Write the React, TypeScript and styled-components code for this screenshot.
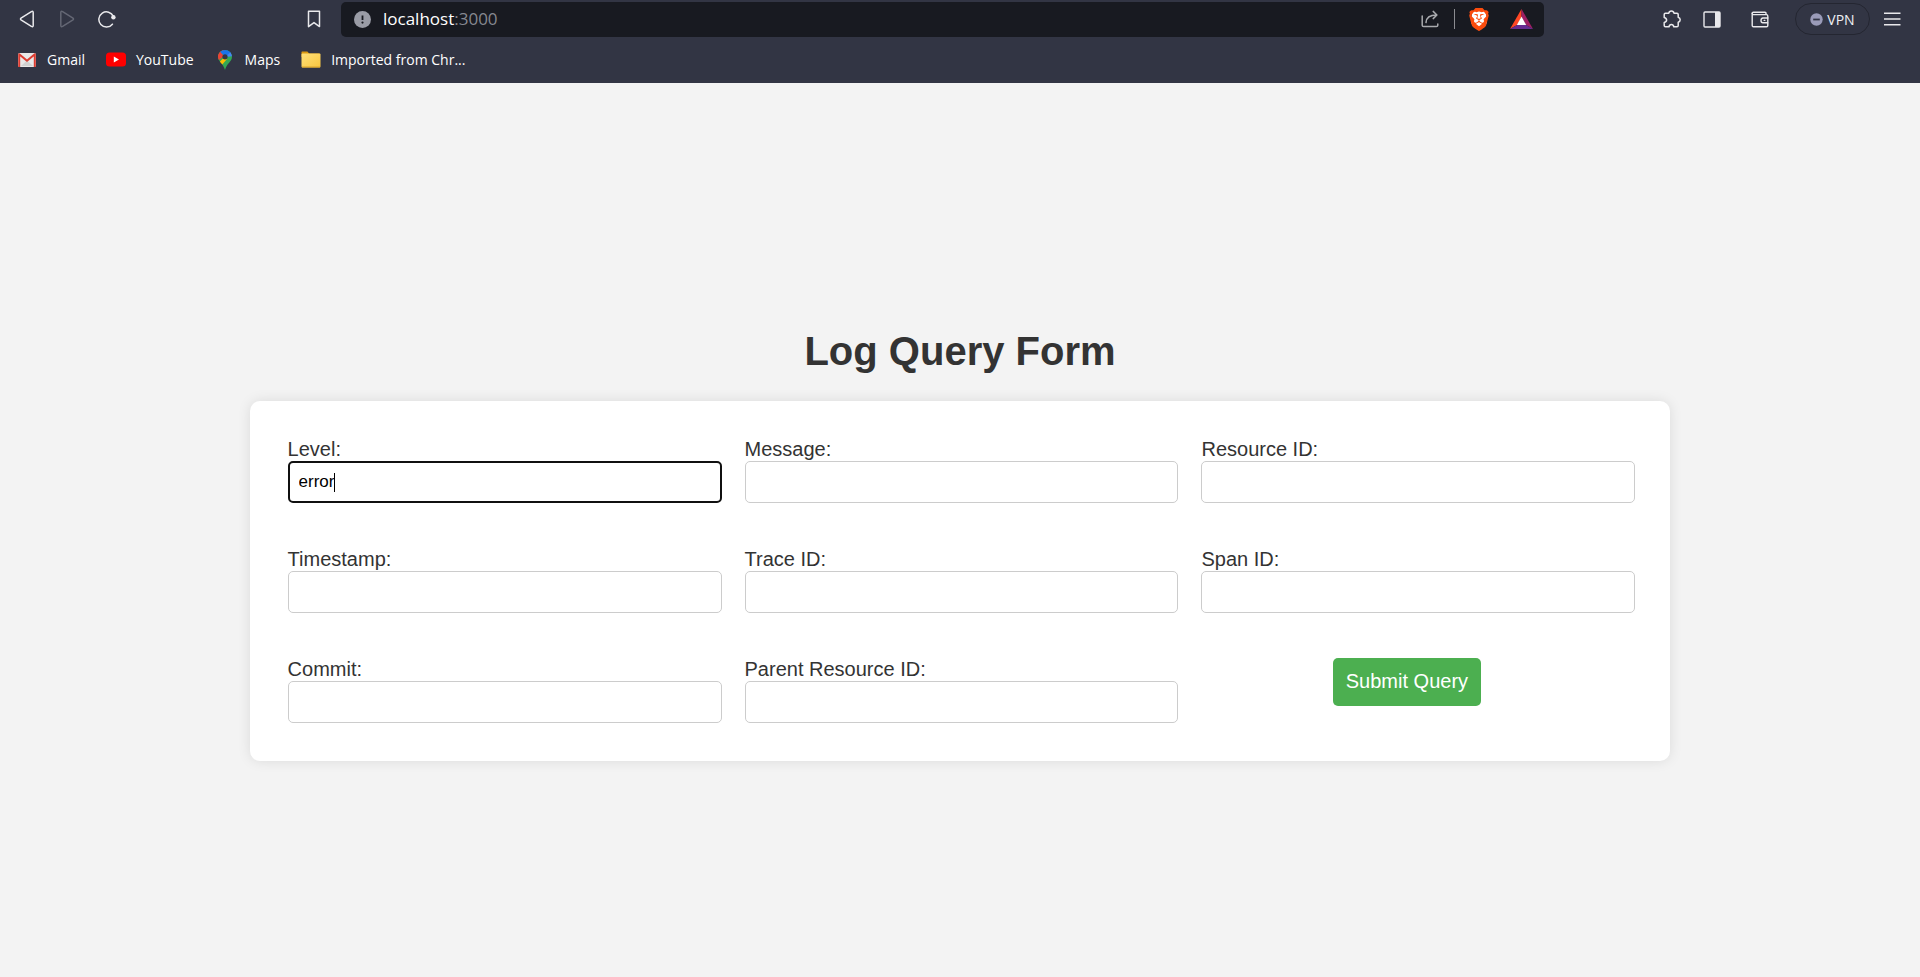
import React from "react";
import styled, { createGlobalStyle } from "styled-components";
import { SiBrave } from "react-icons/si";

const GlobalStyle = createGlobalStyle`
  *, *::before, *::after { box-sizing: border-box; }
  body {
    margin: 0;
    background: #f3f3f3;
    font-family: Arial, "Liberation Sans", sans-serif;
    color: #333;
  }
`;

const Page = styled.div`
  display: flex;
  flex-direction: column;
  min-height: 100vh;
`;

const BrowserBar = styled.header`
  display: flex;
  flex-direction: column;
  height: 83px;
  background: #323544;
  color: #fff;
  font-family: "Segoe UI", "Open Sans", "Noto Sans", sans-serif;
`;

const Toolbar = styled.div`
  display: flex;
  align-items: center;
  height: 38px;
  padding: 0 8px 0 7px;
`;

const NavGroup = styled.div`
  display: flex;
  align-items: center;
  width: 334px;
  padding-right: 7px;
`;

const ToolGroup = styled.div`
  display: flex;
  align-items: center;
  justify-content: flex-end;
  width: 368px;
`;

const IconButton = styled.button<{ $push?: boolean; $dim?: boolean; $gap?: number }>`
  display: flex;
  align-items: center;
  justify-content: center;
  width: 40px;
  height: 34px;
  margin: 0;
  margin-left: ${(p) => (p.$push ? "auto" : `${p.$gap ?? 0}px`)};
  padding: 0;
  border: 0;
  background: none;
  color: ${(p) => (p.$dim ? "#646774" : "#e9e9ec")};
`;

const AddressBar = styled.div`
  display: flex;
  flex: 1;
  align-items: center;
  height: 35px;
  padding: 0 3px 0 13px;
  border-radius: 5px;
  background: #181a21;
`;

const AddressText = styled.div`
  flex: 1;
  margin-left: 12px;
  font-size: 17px;
  line-height: 24px;
  outline: none;
`;

const Port = styled.span`
  color: #868890;
`;

const Divider = styled.span`
  width: 1px;
  height: 20px;
  margin: 0 4px;
  background: #8b8c91;
`;

const VpnButton = styled.button`
  display: flex;
  align-items: center;
  justify-content: center;
  gap: 4px;
  width: 75px;
  height: 32px;
  margin: 0 2px 0 15px;
  padding: 0;
  border: 1px solid #242631;
  border-radius: 16px;
  background: none;
  color: #f0f0f4;
  font-family: inherit;
  font-size: 14px;
`;

const Bookmarks = styled.nav`
  display: flex;
  align-items: center;
  gap: 21px;
  height: 43px;
  padding: 0 17px;
`;

const Bookmark = styled.a`
  display: flex;
  align-items: center;
  gap: 10px;
  color: #fff;
  font-size: 14px;
  line-height: 20px;
  text-decoration: none;
  white-space: nowrap;
`;

const Main = styled.main`
  display: flex;
  flex: 1;
  flex-direction: column;
  align-items: center;
  justify-content: center;
`;

const Title = styled.h1`
  margin: 28px 0 27px;
  font-size: 40px;
  line-height: 46px;
`;

const QueryForm = styled.form`
  display: grid;
  grid-template-columns: repeat(3, minmax(0, 1fr));
  column-gap: 23px;
  row-gap: 45px;
  width: 74%;
  padding: 37px 35px 38px 38px;
  border-radius: 10px;
  background: #fff;
  box-shadow: 0 0 13px rgba(0, 0, 0, 0.1);
`;

const Field = styled.div`
  display: flex;
  flex-direction: column;
`;

const Label = styled.label`
  font-size: 20px;
  line-height: 23px;
`;

const InputWrap = styled.div`
  position: relative;
  display: flex;
`;

const Caret = styled.span`
  position: absolute;
  top: 12px;
  left: 46px;
  display: none;
  width: 1px;
  height: 19px;
  background: #000;
`;

const TextInput = styled.input`
  width: 100%;
  height: 42px;
  padding: 0 10px;
  border: 1px solid #ccc;
  border-radius: 5px;
  background: #fff;
  color: #000;
  caret-color: transparent;
  font-family: inherit;
  font-size: 17px;

  &:focus {
    padding: 0 9px;
    border: 2px solid #101010;
    outline: none;
  }

  &:focus + ${Caret} {
    display: block;
  }
`;

const SubmitCell = styled.div`
  display: flex;
  align-items: flex-start;
  justify-content: center;
  padding-right: 23px;
`;

const SubmitButton = styled.button`
  height: 48px;
  padding: 0 13px;
  border: 0;
  border-radius: 5px;
  background: #4caf50;
  color: #fff;
  font-family: inherit;
  font-size: 20px;
`;

const stroke = {
  fill: "none",
  stroke: "currentColor",
  strokeWidth: 1.5,
  strokeLinecap: "round",
  strokeLinejoin: "round",
} as const;

const BackIcon = () => (
  <svg width="16" height="18" viewBox="0 0 16 18" {...stroke}>
    <path d="M2 8.2 12.4 1.6Q14.2.8 14.2 2.6V15.4Q14.2 17.2 12.4 16.4L2 9.8Q1 9 2 8.2Z" />
  </svg>
);

const ForwardIcon = () => (
  <svg width="16" height="18" viewBox="0 0 16 18" {...stroke}>
    <path d="M14 8.2 3.6 1.6Q1.8.8 1.8 2.6V15.4Q1.8 17.2 3.6 16.4L14 9.8Q15 9 14 8.2Z" />
  </svg>
);

const ReloadIcon = () => (
  <svg width="18" height="18" viewBox="0 0 18 18" {...stroke}>
    <path d="M15.4 6.4A7.6 7.6 0 1 0 14.4 14.2" />
    <circle cx="15.4" cy="7.2" r="2.2" fill="currentColor" stroke="none" />
  </svg>
);

const BookmarkIcon = () => (
  <svg width="14" height="18" viewBox="0 0 14 18" {...stroke}>
    <path d="M1.5 1.2H12.5V16.6L7 12.6 1.5 16.6Z" />
  </svg>
);

const InfoIcon = () => (
  <svg width="17" height="17" viewBox="0 0 17 17">
    <circle cx="8.5" cy="8.5" r="8.5" fill="#9a9ca6" />
    <path d="M8.5 4.5V9" stroke="#181a21" strokeWidth="1.8" />
    <circle cx="8.5" cy="11.6" r="1.1" fill="#181a21" />
  </svg>
);

const ShareIcon = () => (
  <svg width="18" height="18" viewBox="0 0 18 18" {...stroke} stroke="#a9aaae">
    <path d="M1.2 6V15.2Q1.2 16.6 2.6 16.6H15.4Q16.8 16.6 16.8 15.2V14" />
    <path d="M5 12.6Q5.4 5 15.6 5M12.2 1.4 15.9 5 12.2 8.6" />
  </svg>
);

const BraveIcon = () => (
  <svg width="20" height="23" viewBox="0 0 20 23">
    <path d="M3 3H17L18 15 10 21 2 15Z" fill="#fff" />
    <SiBrave x={-1.5} y={0} size={23} color="#fb4c0d" />
  </svg>
);

const RewardsIcon = () => (
  <svg width="23" height="20" viewBox="0 0 23 20">
    <path d="M11.5 0 0 20 7 16 11.5 8Z" fill="#ff4724" />
    <path d="M11.5 0 23 20 16 16 11.5 8Z" fill="#9e1f63" />
    <path d="M0 20H23L16 16H7Z" fill="#662d91" />
    <path d="M11.5 7.6 6.8 16H16.2Z" fill="#fff" />
  </svg>
);

const PuzzleIcon = () => (
  <svg width="18" height="18" viewBox="0 0 18 18" {...stroke}>
    <path d="M1.2 4.4Q1.2 3.2 2.4 3.2H5.8Q6.2 1 8.4 1T11 3.2H14Q15.2 3.2 15.2 4.4V7.2Q17.2 7.8 17.2 9.8T15.2 12.2V15.4Q15.2 16.8 14 16.8H10.8Q10.4 14.6 8.4 14.6T6 16.8H2.4Q1.2 16.8 1.2 15.6V12.4Q3.6 12 3.6 10T1.2 7.4Z" />
  </svg>
);

const SidebarIcon = () => (
  <svg width="18" height="17" viewBox="0 0 18 17">
    <rect x="1" y="1" width="16" height="15" rx="1" fill="none" stroke="currentColor" strokeWidth="1.4" />
    <path d="M12 1H17V16H12Z" fill="currentColor" />
  </svg>
);

const WalletIcon = () => (
  <svg width="18" height="17" viewBox="0 0 18 17" {...stroke} strokeWidth="1.4">
    <path d="M16.8 7V5Q16.800 3.600 15.400 3.600H1.600M1.200 2.400V14.600Q1.200 15.800 2.400 15.800H15.600Q16.800 15.800 16.800 14.600V12" />
    <path d="M15 3.400V2.200Q15 1.200 14 1.200H2.400Q1.200 1.200 1.200 2.400" />
    <path d="M16.800 7H12Q10 7.200 10 9.400T12 11.800H16.800ZM13.200 9.400H13.800" />
  </svg>
);

const VpnIcon = () => (
  <svg width="13" height="13" viewBox="0 0 13 13">
    <circle cx="6.5" cy="6.5" r="6.2" fill="#9a9bb8" />
    <path d="M3.2 6.5H9.8" stroke="#323544" strokeWidth="1.8" />
  </svg>
);

const MenuIcon = () => (
  <svg width="18" height="14" viewBox="0 0 18 14" stroke="currentColor" strokeWidth="1.4">
    <path d="M1 1.2H17.5M1 7H17.5M1 12.8H17.5" />
  </svg>
);

const GmailIcon = () => (
  <svg width="20" height="16" viewBox="0 0 20 16">
    <rect x="1" y="1" width="18" height="14" rx="1.5" fill="#e9e9e9" />
    <path d="M4 14 10 8.6 16 14Z" fill="#d2d2d2" />
    <path d="M2.200 15V2.200L10 8.800 17.800 2.200V15" fill="none" stroke="#dc3d32" strokeWidth="2" strokeLinejoin="round" />
  </svg>
);

const YouTubeIcon = () => (
  <svg width="20" height="15" viewBox="0 0 20 15">
    <rect y=".5" width="20" height="14" rx="3.5" fill="#f00" />
    <path d="M7.8 4.4 13 7.5 7.8 10.6Z" fill="#fff" />
  </svg>
);

const MapsIcon = () => (
  <svg width="20" height="20" viewBox="-1 0 20 20">
    <defs>
      <clipPath id="pin">
        <path d="M9 0C5 0 2 3 2 6.8 2 11.8 7.2 13.2 9 20 10.8 13.2 16 11.8 16 6.8 16 3 13 0 9 0Z" />
      </clipPath>
    </defs>
    <g clipPath="url(#pin)">
      <path d="M0 0H18V20H0Z" fill="#34a853" />
      <path d="M0 10 9 0H0Z" fill="#ea4335" />
      <path d="M4 2 9 7 15.5 2 13-1H5Z" fill="#1a73e8" />
      <path d="M9 7 15 1.8 18 6Z" fill="#4285f4" />
      <path d="M0 15 9 6.8 11 9 5 16Z" fill="#fbbc04" />
      <path d="M0 9 4.2 2.2 8 6 3 10Z" fill="#ea4335" />
    </g>
    <circle cx="9" cy="6.8" r="2.6" fill="#323544" />
  </svg>
);

const FolderIcon = () => (
  <svg width="20" height="17" viewBox="0 0 20 17">
    <defs>
      <linearGradient id="folder" x1="0" y1="0" x2="1" y2="1">
        <stop offset="0" stopColor="#ffe07a" />
        <stop offset="1" stopColor="#f8c63f" />
      </linearGradient>
    </defs>
    <path d="M.5 1Q.5.4 1.2.4H6.4L8.2 2.4H18.5V6H.5Z" fill="#dc9a12" />
    <rect x=".5" y="2.4" width="19" height="14" rx="1" fill="url(#folder)" />
    <path d="M1 16H19" stroke="#d9a32a" strokeWidth="1" />
  </svg>
);

const bookmarks = [
  { label: "Gmail", icon: <GmailIcon /> },
  { label: "YouTube", icon: <YouTubeIcon /> },
  { label: "Maps", icon: <MapsIcon /> },
  { label: "Imported from Chr...", icon: <FolderIcon /> },
];

const fields = [
  { id: "level", label: "Level:", value: "error" },
  { id: "message", label: "Message:" },
  { id: "resourceId", label: "Resource ID:" },
  { id: "timestamp", label: "Timestamp:" },
  { id: "traceId", label: "Trace ID:" },
  { id: "spanId", label: "Span ID:" },
  { id: "commit", label: "Commit:" },
  { id: "parentResourceId", label: "Parent Resource ID:" },
];

export default function App() {
  return (
    <Page>
      <GlobalStyle />
      <BrowserBar>
        <Toolbar>
          <NavGroup>
            <IconButton aria-label="Back"><BackIcon /></IconButton>
            <IconButton aria-label="Forward" $dim><ForwardIcon /></IconButton>
            <IconButton aria-label="Reload"><ReloadIcon /></IconButton>
            <IconButton aria-label="Bookmark this page" $push><BookmarkIcon /></IconButton>
          </NavGroup>
          <AddressBar>
            <InfoIcon />
            <AddressText role="textbox" aria-label="Address" contentEditable suppressContentEditableWarning spellCheck={false}>
              localhost<Port>:3000</Port>
            </AddressText>
            <IconButton aria-label="Share"><ShareIcon /></IconButton>
            <Divider />
            <IconButton aria-label="Brave Shields"><BraveIcon /></IconButton>
            <IconButton aria-label="Brave Rewards" $gap={2}><RewardsIcon /></IconButton>
          </AddressBar>
          <ToolGroup>
            <IconButton aria-label="Extensions"><PuzzleIcon /></IconButton>
            <IconButton aria-label="Sidebar"><SidebarIcon /></IconButton>
            <IconButton aria-label="Wallet" $gap={8}><WalletIcon /></IconButton>
            <VpnButton><VpnIcon />VPN</VpnButton>
            <IconButton aria-label="Menu"><MenuIcon /></IconButton>
          </ToolGroup>
        </Toolbar>
        <Bookmarks aria-label="Bookmarks">
          {bookmarks.map((b) => (
            <Bookmark key={b.label} href="#">
              {b.icon}
              {b.label}
            </Bookmark>
          ))}
        </Bookmarks>
      </BrowserBar>
      <Main>
        <Title>Log Query Form</Title>
        <QueryForm onSubmit={(e) => e.preventDefault()}>
          {fields.map((f) => (
            <Field key={f.id}>
              <Label htmlFor={f.id}>{f.label}</Label>
              <InputWrap>
                <TextInput id={f.id} name={f.id} type="text" defaultValue={f.value} autoFocus={f.id === "level"} />
                {f.value && <Caret />}
              </InputWrap>
            </Field>
          ))}
          <SubmitCell>
            <SubmitButton type="submit">Submit Query</SubmitButton>
          </SubmitCell>
        </QueryForm>
      </Main>
    </Page>
  );
}
